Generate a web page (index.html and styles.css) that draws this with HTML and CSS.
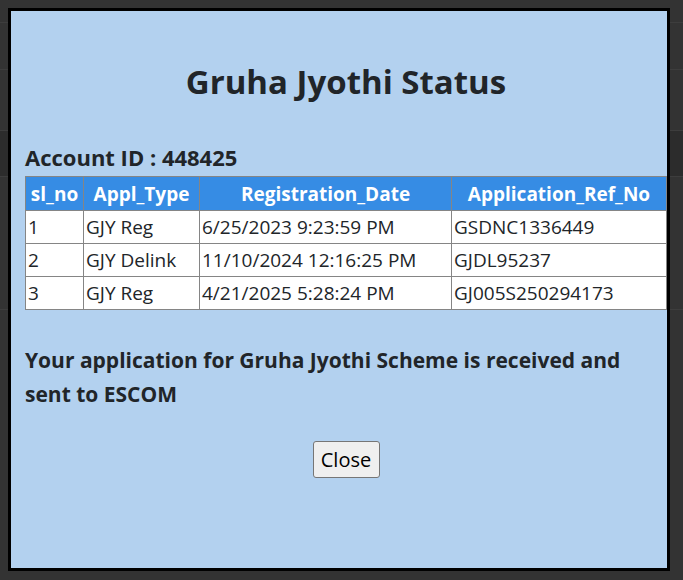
FILE: index.html
```html
<!DOCTYPE html>
<html>
<head>
<meta charset="utf-8">
<link rel="stylesheet" href="styles.css">
</head>
<body>
<div class="page">
  <div class="bg-row r1"></div>
  <div class="bg-row r2"></div>
  <div class="bg-row r3"></div>
  <div class="bg-row r4"></div>
  <div class="bg-row r5"></div>
</div>
<div class="modal">
  <h2 class="title">Gruha Jyothi Status</h2>
  <h5 class="account">Account ID : 448425</h5>
  <table class="status">
    <colgroup>
      <col class="c1"><col class="c2"><col class="c3"><col class="c4">
    </colgroup>
    <thead>
      <tr><th>sl_no</th><th>Appl_Type</th><th>Registration_Date</th><th>Application_Ref_No</th></tr>
    </thead>
    <tbody>
      <tr><td>1</td><td>GJY Reg</td><td>6/25/2023 9:23:59 PM</td><td>GSDNC1336449</td></tr>
      <tr><td>2</td><td>GJY Delink</td><td>11/10/2024 12:16:25 PM</td><td>GJDL95237</td></tr>
      <tr><td>3</td><td>GJY Reg</td><td>4/21/2025 5:28:24 PM</td><td>GJ005S250294173</td></tr>
    </tbody>
  </table>
  <p class="message">Your application for Gruha Jyothi Scheme is received and sent to ESCOM</p>
  <div class="actions"><button class="close">Close</button></div>
</div>
</body>
</html>
```
FILE: styles.css
```css
html, body {
  margin: 0;
  padding: 0;
  background: #333333;
  width: 683px;
  height: 580px;
  overflow: hidden;
  font-family: "Open Sans", "Noto Sans", sans-serif;
}
.page {
  display: flex;
  flex-direction: column;
}
.bg-row { border-bottom: 1px solid #3d3d3d; }
.r1 { height: 22px; }
.r2 { height: 46px; }
.r3 { height: 60px; }
.r4 { height: 45px; background: #2c2c2c; }
.r5 { height: 132px; }
.modal {
  position: absolute;
  top: 8px;
  left: 8px;
  width: 642px;
  height: 557px;
  padding: 0 0 0 14px;
  border: 3px solid #000;
  background: #b3d1ef;
  color: #212529;
}
.title {
  margin: 52px 0 0;
  font-size: 33px;
  line-height: 38px;
  font-weight: 700;
  text-align: center;
}
.account {
  margin: 43px 0 0;
  font-size: 22px;
  line-height: 26px;
  font-weight: 700;
}
.status {
  margin-top: 6px;
  width: 641px;
  border-collapse: collapse;
  table-layout: fixed;
  font-size: 19px;
  white-space: nowrap;
}
.c1 { width: 58px; }
.c2 { width: 116px; }
.c3 { width: 252px; }
.c4 { width: 215px; }
.status th, .status td {
  border: 1px solid #858585;
  padding: 0 2px;
}
.status th {
  background: #368ce4;
  color: #fff;
  font-weight: 700;
  height: 33px;
  text-align: center;
}
.status td {
  background: #fff;
  height: 32px;
  text-align: left;
}
.message {
  margin: 33px 0 0;
  font-size: 21px;
  line-height: 34px;
  font-weight: 700;
}
.actions {
  margin-top: 30px;
  display: flex;
  justify-content: center;
}
.close {
  width: 67px;
  height: 37px;
  padding: 0;
  font-family: "Open Sans", "Noto Sans", sans-serif;
  font-size: 20px;
  color: #000;
  background: #efefef;
  border: 1px solid #767676;
  border-radius: 3px;
}
```
